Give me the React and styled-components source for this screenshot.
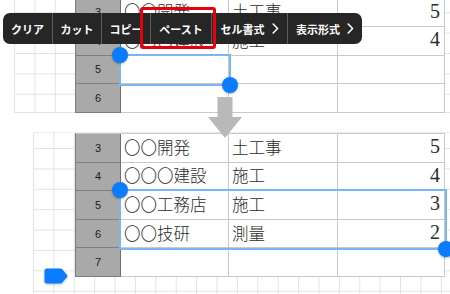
import React from "react";
import styled, { createGlobalStyle } from "styled-components";

const ROW_H = 28.6;
const COLS = [45, 108, 109, 107];

const GlobalStyle = createGlobalStyle`
  html, body {
    margin: 0;
    padding: 0;
    background: #ffffff;
    overflow: hidden;
  }
  #root {
    width: 450px;
    height: 294px;
  }
`;

const topRows = [
  { no: 3, name: "〇〇開発", kind: "土工事", count: "5" },
  { no: 4, name: "〇〇〇建設", kind: "施工", count: "4" },
  { no: 5 },
  { no: 6 },
];

const bottomRows = [
  { no: 3, name: "〇〇開発", kind: "土工事", count: "5" },
  { no: 4, name: "〇〇〇建設", kind: "施工", count: "4" },
  { no: 5, name: "〇〇工務店", kind: "施工", count: "3" },
  { no: 6, name: "〇〇技研", kind: "測量", count: "2" },
  { no: 7 },
];

const menuItems = [
  { label: "クリア", width: 49 },
  { label: "カット", width: 48 },
  { label: "コピー", width: 48 },
  { label: "ペースト", width: 60 },
  { label: "セル書式", width: 75, more: true },
  { label: "表示形式", width: 74, more: true },
];

const Chevron = () => (
  <svg width="7" height="11" viewBox="0 0 7 11">
    <polyline
      points="1.2,1 5.6,5.5 1.2,10"
      fill="none"
      stroke="#ffffff"
      strokeWidth="1.6"
      strokeLinecap="round"
      strokeLinejoin="round"
    />
  </svg>
);

const SheetRows = ({ rows }) =>
  rows.map((r) => (
    <React.Fragment key={r.no}>
      <Sheet.Header>{r.no}</Sheet.Header>
      <Sheet.Cell>{r.name}</Sheet.Cell>
      <Sheet.Cell>{r.kind}</Sheet.Cell>
      <Sheet.Cell $num>{r.count}</Sheet.Cell>
    </React.Fragment>
  ));

const App = () => {
  return (
    <>
      <GlobalStyle />
      <Page.Wrapper>
        <Page.TopPanel>
          <Page.Canvas $offsetY={12.2} $top>
            <Sheet.Grid $shift={-2.6} $left={61}>
              <SheetRows rows={topRows} />
              <Sheet.Selection $row={2} $rows={1} $from={1} $to={2}>
                <Sheet.Handle $corner="start" />
                <Sheet.Handle $corner="end" />
              </Sheet.Selection>
            </Sheet.Grid>
          </Page.Canvas>
        </Page.TopPanel>

        <Page.BottomPanel>
          <Page.Canvas $offsetY={15}>
            <Sheet.Grid $shift={0} $left={42}>
              <SheetRows rows={bottomRows} />
              <Sheet.Selection $row={2} $rows={2} $from={1} $to={4}>
                <Sheet.Handle $corner="start" />
                <Sheet.Handle $corner="end" />
              </Sheet.Selection>
            </Sheet.Grid>
          </Page.Canvas>
        </Page.BottomPanel>

        <Menu.Bar>
          {menuItems.map((m) => (
            <Menu.Item key={m.label} $width={m.width}>
              <span>{m.label}</span>
              {m.more && <Chevron />}
            </Menu.Item>
          ))}
        </Menu.Bar>
        <Menu.Highlight />

        <Page.Arrow width="34" height="41" viewBox="0 0 34 41">
          <polygon
            points="9.5,0 24.5,0 24.5,20 34,20 17,41 0,20 9.5,20"
            fill="#b9b9b9"
          />
        </Page.Arrow>

        <Page.Tab width="24" height="16" viewBox="0 0 24 16">
          <path
            d="M3 0.5 H16.5 Q17.5 0.5 18.2 1.2 L23 7 Q23.6 8 23 9 L18.2 14.8 Q17.5 15.5 16.5 15.5 H3 Q0.5 15.5 0.5 13 V3 Q0.5 0.5 3 0.5 Z"
            fill="#0a7cff"
          />
        </Page.Tab>
      </Page.Wrapper>
    </>
  );
};

const Page = {
  Wrapper: styled.div`
    position: relative;
    width: 450px;
    height: 294px;
    overflow: hidden;
    display: flex;
    flex-direction: column;
    background: #ffffff;
  `,
  TopPanel: styled.section`
    height: 113px;
    overflow: hidden;
    display: flex;
    padding-left: 14px;
  `,
  BottomPanel: styled.section`
    flex: 1;
    display: flex;
    padding: 20px 0 0 33px;
  `,
  Canvas: styled.div`
    flex: 1;
    min-width: 0;
    background-color: #ffffff;
    background-image: linear-gradient(to right, #e3e3e3 1px, transparent 1px),
      linear-gradient(to bottom, #e3e3e3 1px, transparent 1px);
    background-size: 20.4px 20.4px;
    background-position: 0 ${({ $offsetY }) => $offsetY}px;
    ${({ $top }) =>
      $top
        ? `border-bottom: 1px solid #e3e3e3;`
        : `border-top: 1px solid #ececec; margin-top: -1px;`}
  `,
  Arrow: styled.svg`
    position: absolute;
    left: 208px;
    top: 97px;
  `,
  Tab: styled.svg`
    position: absolute;
    left: 44px;
    top: 268px;
    filter: drop-shadow(0 1px 1px rgba(0, 0, 0, 0.25));
  `,
};

const Sheet = {
  Grid: styled.div`
    position: relative;
    display: grid;
    grid-template-columns: ${COLS.map((c) => `${c}px`).join(" ")};
    grid-auto-rows: ${ROW_H}px;
    width: max-content;
    margin-left: ${({ $left }) => $left}px;
    margin-top: ${({ $shift }) => $shift}px;
    border-top: 1px solid #c9c9c9;
    border-left: 1px solid #7d7d7d;
    background: #ffffff;
    align-self: flex-start;
  `,
  Header: styled.div`
    display: flex;
    align-items: center;
    justify-content: center;
    background: #a9a9a9;
    border-right: 1px solid #6f6f6f;
    border-bottom: 1px solid #7f7f7f;
    font-family: "Liberation Sans", Arial, sans-serif;
    font-size: 11px;
    color: #1c1c1c;
  `,
  Cell: styled.div`
    display: flex;
    align-items: center;
    justify-content: ${({ $num }) => ($num ? "flex-end" : "flex-start")};
    padding: ${({ $num }) => ($num ? "0 4px 2px 0" : "0 0 2px 3px")};
    border-right: 1px solid #c9c9c9;
    border-bottom: 1px solid #c9c9c9;
    font-family: "Liberation Serif", "Noto Sans CJK JP", serif;
    font-size: ${({ $num }) => ($num ? "20px" : "16.5px")};
    font-weight: 300;
    color: #2b2b2b;
    white-space: nowrap;
    overflow: hidden;
  `,
  Selection: styled.div`
    position: absolute;
    left: ${({ $from }) => COLS.slice(0, $from).reduce((a, b) => a + b, 0) - 2}px;
    top: ${({ $row }) => $row * ROW_H - 2}px;
    width: ${({ $from, $to }) =>
      COLS.slice($from, $to).reduce((a, b) => a + b, 0)}px;
    height: ${({ $rows }) => $rows * ROW_H}px;
    border: 2px solid #7ab6f4;
    pointer-events: none;
  `,
  Handle: styled.div`
    position: absolute;
    width: 16px;
    height: 16px;
    border-radius: 50%;
    background: #0a7cff;
    box-shadow: 0 1px 2px rgba(0, 0, 0, 0.3);
    ${({ $corner }) =>
      $corner === "start"
        ? `left: -9px; top: -9px;`
        : `right: -9px; bottom: -9px;`}
  `,
};

const Menu = {
  Bar: styled.div`
    position: absolute;
    left: 3px;
    top: 13px;
    height: 31px;
    display: flex;
    background: #262626;
    border-radius: 7px;
    overflow: hidden;
  `,
  Item: styled.div`
    width: ${({ $width }) => $width}px;
    display: flex;
    align-items: center;
    justify-content: center;
    gap: 7px;
    color: #ffffff;
    font-family: "Liberation Sans", "Noto Sans CJK JP", sans-serif;
    font-size: 11px;
    font-weight: 700;
    white-space: nowrap;
    & + & {
      border-left: 1px solid #5c5c5c;
    }
  `,
  Highlight: styled.div`
    position: absolute;
    left: 140px;
    top: 7px;
    width: 70px;
    height: 36px;
    border: 3px solid #e8000c;
    border-radius: 3px;
  `,
};

export default App;
